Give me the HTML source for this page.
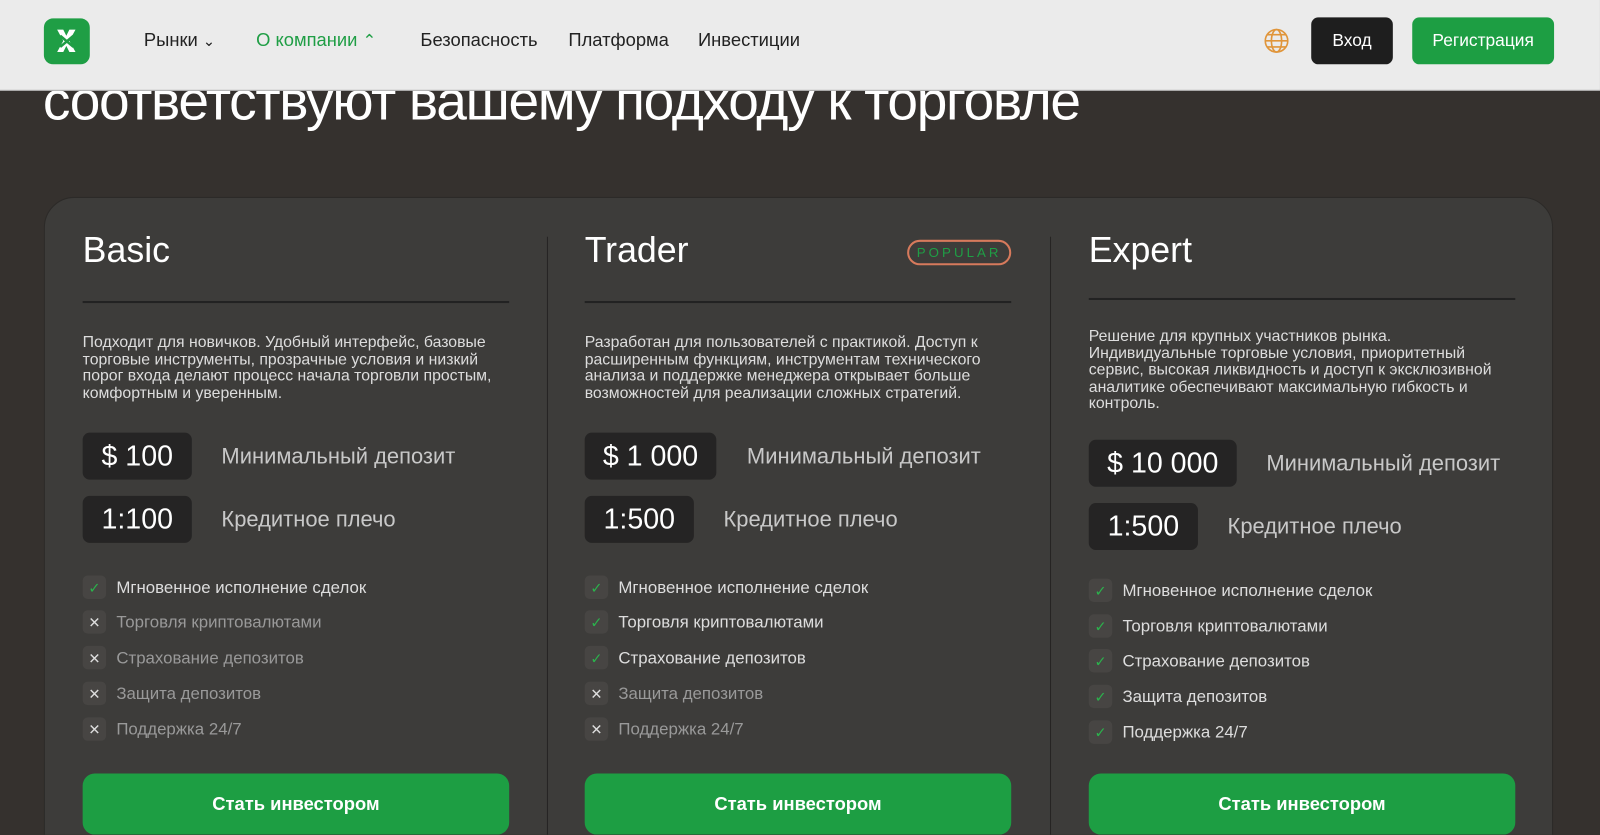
<!DOCTYPE html>
<html><head><meta charset="utf-8"><style>
*{margin:0;padding:0;box-sizing:border-box}
html,body{width:1600px;height:835px;overflow:hidden;background:#35312e}
body{font-family:"Liberation Sans",sans-serif;position:relative}
.w{position:absolute;left:0;top:0;width:1568px;height:818px;overflow:hidden;transform:scale(1.0204);transform-origin:0 0}
.hdr{position:absolute;left:0;top:0;width:1568px;height:89px;background:#ebebeb;border-bottom:1px solid #aaa;z-index:5}
.logo{position:absolute;left:43px;top:18px;width:45px;height:45px;background:#1f9e45;border-radius:9px}
.nav{position:absolute;top:29px;font-size:18px;color:#222}
.h1{position:absolute;left:42px;top:68px;font-size:54px;color:#fff;letter-spacing:-1.3px;white-space:nowrap}
.card{position:absolute;left:43px;top:193px;width:1479px;height:700px;background:#3d3c3a;border:1px solid #2c2a28;border-radius:30px}
.div{position:absolute;top:232px;width:1px;height:620px;background:#262423}
.col{position:absolute;width:418px;color:#fff}
.t{font-size:35px;position:absolute;top:0;left:0}
.line{position:absolute;left:0;width:418px;height:2px;background:#222}
.desc{position:absolute;left:0;font-size:15.5px;line-height:16.5px;color:#ddd;width:418px}
.pill{position:absolute;left:0;height:46px;background:#252424;border-radius:7px;font-size:28px;color:#fff;text-align:center;line-height:46px}
.lbl{position:absolute;font-size:21.5px;color:#c8c8c8;line-height:46px}
.f{position:absolute;left:0;font-size:16.5px;height:24px;line-height:24px;padding-left:33px;white-space:nowrap}
.f i{position:absolute;left:0;top:0;width:23px;height:23px;background:#474543;border-radius:5px;font-style:normal;text-align:center;font-size:14px}
.ok{color:#ddd}.ok i{color:#2bb24c}
.no{color:#999}.no i{color:#ddd}
.btn{position:absolute;left:0;width:418px;height:60px;background:#1d9e43;border-radius:12px;color:#fff;font-size:18px;font-weight:bold;text-align:center;line-height:60px}
</style></head><body><div class="w">
<div class="hdr">
 <div class="logo"><svg width="45" height="45" viewBox="0 0 45 45"><path d="M13 11l6 0 3 6 3-6 6 0-6 11 6 11-6 0-3-6-3 6-6 0 6-11z" fill="#fff"/><path d="M16 17l13 11M29 17l-13 11" stroke="#1f9e45" stroke-width="2.5"/></svg></div>
 <div class="nav" style="left:141px">Рынки <span style="font-size:14px">&#8964;</span></div>
 <div class="nav" style="left:251px;color:#1f9e45">О компании <span style="font-size:16px">&#8963;</span></div>
 <div class="nav" style="left:412px">Безопасность</div>
 <div class="nav" style="left:557px">Платформа</div>
 <div class="nav" style="left:684px">Инвестиции</div>
 <svg style="position:absolute;left:1238px;top:27px" width="26" height="26" viewBox="0 0 26 26" fill="none" stroke="#e0953a" stroke-width="1.6"><circle cx="13" cy="13" r="11"/><ellipse cx="13" cy="13" rx="5" ry="11"/><path d="M2 13h22M4 7h18M4 19h18"/></svg>
 <div style="position:absolute;left:1285px;top:17px;width:80px;height:46px;background:#1e1e1e;border-radius:7px;color:#fff;font-size:17px;text-align:center;line-height:46px">Вход</div>
 <div style="position:absolute;left:1384px;top:17px;width:139px;height:46px;background:#1d9e43;border-radius:7px;color:#fff;font-size:17px;text-align:center;line-height:46px">Регистрация</div>
</div>
<div class="h1">соответствуют вашему подходу к торговле</div>
<div class="card"></div>
<div class="div" style="left:536px"></div>
<div class="div" style="left:1029px"></div>

<div class="col" style="left:81px;top:226px">
 <div class="t">Basic</div>
 <div class="line" style="top:69px"></div>
 <div class="desc" style="top:102px">Подходит для новичков. Удобный интерфейс, базовые торговые инструменты, прозрачные условия и низкий порог входа делают процесс начала торговли простым, комфортным и уверенным.</div>
 <div class="pill" style="top:198px;width:107px">$ 100</div><div class="lbl" style="left:136px;top:198px">Минимальный депозит</div>
 <div class="pill" style="top:260px;width:107px">1:100</div><div class="lbl" style="left:136px;top:260px">Кредитное плечо</div>
 <div class="f ok" style="top:338px"><i>✓</i>Мгновенное исполнение сделок</div>
 <div class="f no" style="top:372px"><i>✕</i>Торговля криптовалютами</div>
 <div class="f no" style="top:407px"><i>✕</i>Страхование депозитов</div>
 <div class="f no" style="top:442px"><i>✕</i>Защита депозитов</div>
 <div class="f no" style="top:477px"><i>✕</i>Поддержка 24/7</div>
 <div class="btn" style="top:532px">Стать инвестором</div>
</div>

<div class="col" style="left:573px;top:226px">
 <div class="t">Trader</div>
 <div style="position:absolute;left:316px;top:9px;width:102px;height:25px;border:2px solid #d77a5c;border-radius:13px;color:#1f9e45;font-size:13px;letter-spacing:3px;text-align:center;line-height:21px">POPULAR</div>
 <div class="line" style="top:69px"></div>
 <div class="desc" style="top:102px">Разработан для пользователей с практикой. Доступ к расширенным функциям, инструментам технического анализа и поддержке менеджера открывает больше возможностей для реализации сложных стратегий.</div>
 <div class="pill" style="top:198px;width:129px">$ 1 000</div><div class="lbl" style="left:159px;top:198px">Минимальный депозит</div>
 <div class="pill" style="top:260px;width:107px">1:500</div><div class="lbl" style="left:136px;top:260px">Кредитное плечо</div>
 <div class="f ok" style="top:338px"><i>✓</i>Мгновенное исполнение сделок</div>
 <div class="f ok" style="top:372px"><i>✓</i>Торговля криптовалютами</div>
 <div class="f ok" style="top:407px"><i>✓</i>Страхование депозитов</div>
 <div class="f no" style="top:442px"><i>✕</i>Защита депозитов</div>
 <div class="f no" style="top:477px"><i>✕</i>Поддержка 24/7</div>
 <div class="btn" style="top:532px">Стать инвестором</div>
</div>

<div class="col" style="left:1067px;top:226px">
 <div class="t">Expert</div>
 <div class="line" style="top:66px"></div>
 <div class="desc" style="top:96px">Решение для крупных участников рынка. Индивидуальные торговые условия, приоритетный сервис, высокая ликвидность и доступ к эксклюзивной аналитике обеспечивают максимальную гибкость и контроль.</div>
 <div class="pill" style="top:205px;width:145px">$ 10 000</div><div class="lbl" style="left:174px;top:205px">Минимальный депозит</div>
 <div class="pill" style="top:267px;width:107px">1:500</div><div class="lbl" style="left:136px;top:267px">Кредитное плечо</div>
 <div class="f ok" style="top:341px"><i>✓</i>Мгновенное исполнение сделок</div>
 <div class="f ok" style="top:376px"><i>✓</i>Торговля криптовалютами</div>
 <div class="f ok" style="top:410px"><i>✓</i>Страхование депозитов</div>
 <div class="f ok" style="top:445px"><i>✓</i>Защита депозитов</div>
 <div class="f ok" style="top:480px"><i>✓</i>Поддержка 24/7</div>
 <div class="btn" style="top:532px">Стать инвестором</div>
</div>
</div></body></html>
